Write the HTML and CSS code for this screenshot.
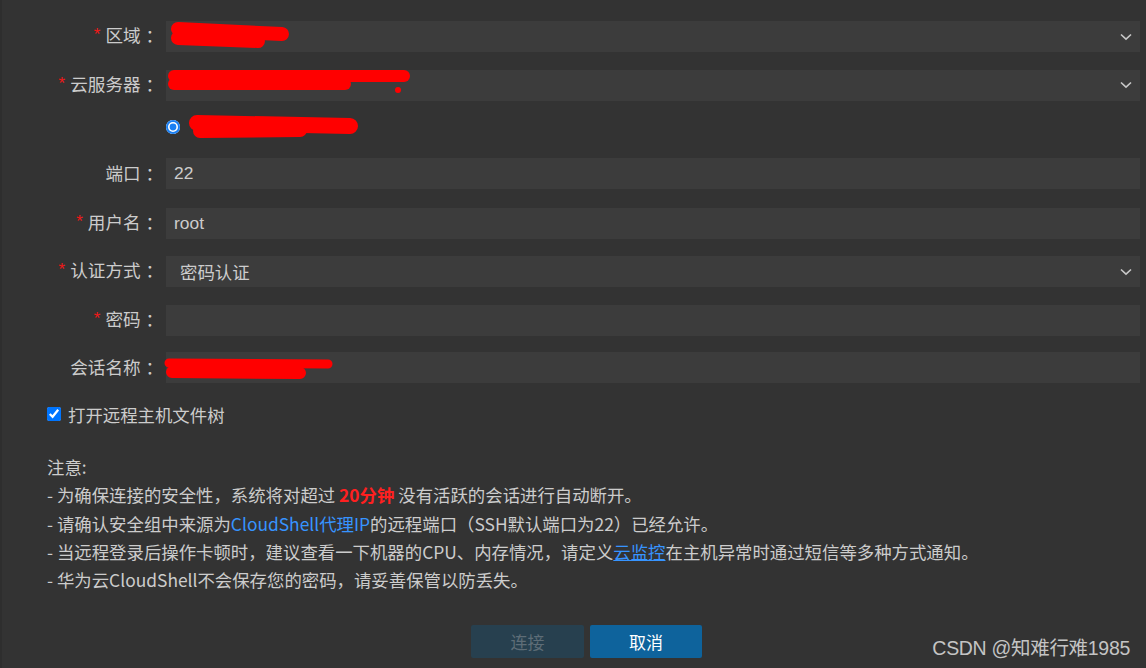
FILE: index.html
```html
<!DOCTYPE html>
<html lang="zh-CN">
<head>
<meta charset="utf-8">
<title>CloudShell 连接</title>
<link rel="stylesheet" href="styles.css">
</head>
<body>
<div class="page">
  <div class="form">
    <div class="row">
      <div class="lbl"><span class="req">*</span>区域<span class="colon">：</span></div>
      <div class="field select"><span class="val"></span>
        <svg class="chev" width="12" height="8" viewBox="0 0 12 8"><path d="M1 1.5 L6 6.2 L11 1.5" fill="none" stroke="#c8c8c8" stroke-width="1.6"/></svg>
      </div>
    </div>
    <div class="row">
      <div class="lbl"><span class="req">*</span>云服务器<span class="colon">：</span></div>
      <div class="field select"><span class="val"></span>
        <svg class="chev" width="12" height="8" viewBox="0 0 12 8"><path d="M1 1.5 L6 6.2 L11 1.5" fill="none" stroke="#c8c8c8" stroke-width="1.6"/></svg>
      </div>
    </div>
    <div class="row radio-row">
      <div class="lbl"></div>
      <div class="radio-cell"><input class="radio" type="radio" checked></div>
    </div>
    <div class="row">
      <div class="lbl">端口<span class="colon">：</span></div>
      <div class="field"><span class="val">22</span></div>
    </div>
    <div class="row">
      <div class="lbl"><span class="req">*</span>用户名<span class="colon">：</span></div>
      <div class="field"><span class="val">root</span></div>
    </div>
    <div class="row">
      <div class="lbl"><span class="req">*</span>认证方式<span class="colon">：</span></div>
      <div class="field select"><span class="val sel-val">密码认证</span>
        <svg class="chev" width="12" height="8" viewBox="0 0 12 8"><path d="M1 1.5 L6 6.2 L11 1.5" fill="none" stroke="#c8c8c8" stroke-width="1.6"/></svg>
      </div>
    </div>
    <div class="row">
      <div class="lbl"><span class="req">*</span>密码<span class="colon">：</span></div>
      <div class="field"><span class="val"></span></div>
    </div>
    <div class="row">
      <div class="lbl">会话名称<span class="colon">：</span></div>
      <div class="field"><span class="val"></span></div>
    </div>
  </div>

  <label class="check"><input class="checkbox" type="checkbox" checked>打开远程主机文件树</label>

  <div class="notes">
    <div>注意:</div>
    <div>- 为确保连接的安全性，系统将对超过 <b class="warn">20分钟</b> 没有活跃的会话进行自动断开。</div>
    <div>- 请确认安全组中来源为<span class="link">CloudShell代理IP</span>的远程端口（SSH默认端口为22）已经允许。</div>
    <div>- 当远程登录后操作卡顿时，建议查看一下机器的CPU、内存情况，请定义<span class="link ul">云监控</span>在主机异常时通过短信等多种方式通知。</div>
    <div>- 华为云CloudShell不会保存您的密码，请妥善保管以防丢失。</div>
  </div>

  <div class="actions">
    <button class="btn btn-connect" disabled>连接</button>
    <button class="btn btn-cancel">取消</button>
    <div class="watermark">CSDN @知难行难1985</div>
  </div>

  <svg class="redact" width="1146" height="668" viewBox="0 0 1146 668">
    <g stroke="#ff0000" stroke-linecap="round" fill="none">
      <path d="M178 29 L282 34" stroke-width="14"/>
      <path d="M178 38 L258 41" stroke-width="14"/>
      <path d="M174 76 L404 76" stroke-width="12"/>
      <path d="M174 84 L345 84" stroke-width="12"/>
      <circle cx="398" cy="90" r="3" fill="#ff0000" stroke="none"/>
      <path d="M197 123 L350 126" stroke-width="16"/>
      <path d="M200 131 L300 130" stroke-width="14"/>
      <path d="M169 363 L328 364" stroke-width="9"/>
      <path d="M172 372 L300 373" stroke-width="12"/>
    </g>
  </svg>
</div>
</body>
</html>
```

FILE: styles.css
```css
* { box-sizing: border-box; }
html, body {
  margin: 0;
  padding: 0;
  background: #333333;
}
body {
  font-family: "Noto Sans CJK SC", "Liberation Sans", sans-serif;
  font-size: 17.4px;
  color: #cccccc;
}
.page {
  position: relative;
  width: 1146px;
  height: 668px;
  overflow: hidden;
  border-left: 2px solid #2e2e2e;
}
.form {
  display: flex;
  flex-direction: column;
  gap: 17.5px;
  padding: 20px 6px 0 0;
}
.row {
  display: grid;
  grid-template-columns: 162px 1fr;
  column-gap: 2px;
  height: 31px;
  align-items: center;
}
.radio-row { height: 23.5px; align-items: start; }
.lbl {
  text-align: right;
  white-space: nowrap;
  line-height: 31px;
  position: relative;
  top: -1px;
  font-size: 17.6px;
}
.colon {
  display: inline-block;
  width: 17.4px;
  text-align: center;
  text-indent: 5px;
  margin-right: 6px;
}
.req {
  color: #f01818;
  font-family: "Liberation Sans", sans-serif;
  font-size: 17px;
  margin-right: 5px;
  position: relative;
  top: -2px;
}
.field {
  height: 31px;
  background: #3c3c3c;
  display: flex;
  align-items: center;
  padding: 0 8px;
}
.val {
  font-family: "Liberation Sans", "Noto Sans CJK SC", sans-serif;
  font-size: 17.4px;
  color: #cccccc;
  flex: 1;
}
.sel-val {
  padding-left: 6px;
  font-family: "Noto Sans CJK SC", sans-serif;
}
.chev { flex: none; }
.radio-cell { display: flex; height: 23.5px; align-items: center; padding-bottom: 4px; }
.radio {
  appearance: none;
  -webkit-appearance: none;
  margin: 0;
  width: 14px;
  height: 14px;
  border-radius: 50%;
  background: #1a7ff2;
  box-shadow: inset 0 0 0 2px #1a7ff2, inset 0 0 0 3.6px #ffffff;
}
.check {
  display: flex;
  align-items: center;
  gap: 7px;
  margin: 19px 0 0 45px;
  height: 24px;
}
.checkbox {
  margin: 0;
  width: 14px;
  height: 14px;
}
.notes {
  margin: 27px 0 0 45px;
  line-height: 28.3px;
}
.warn { color: #ff2020; font-weight: 700; }
.link { color: #3794ff; }
.ul { text-decoration: underline; }
.actions {
  position: relative;
  display: flex;
  justify-content: center;
  gap: 6px;
  padding-left: 25px;
  margin-top: 31px;
}
.btn {
  width: 113px;
  height: 33px;
  border: none;
  border-radius: 2px;
  font-family: "Noto Sans CJK SC", sans-serif;
  font-size: 17px;
  padding: 0;
}
.btn-connect { background: #27404f; color: #5e6d77; }
.btn-cancel { background: #0e639c; color: #ffffff; width: 112px; }
.watermark {
  position: absolute;
  right: 16px;
  top: 7px;
  font-family: "Liberation Sans", "Noto Sans CJK SC", sans-serif;
  font-size: 19.5px;
  color: #c4c4c4;
  letter-spacing: -0.3px;
}
.redact {
  position: absolute;
  left: -2px;
  top: 0;
  pointer-events: none;
}
```
